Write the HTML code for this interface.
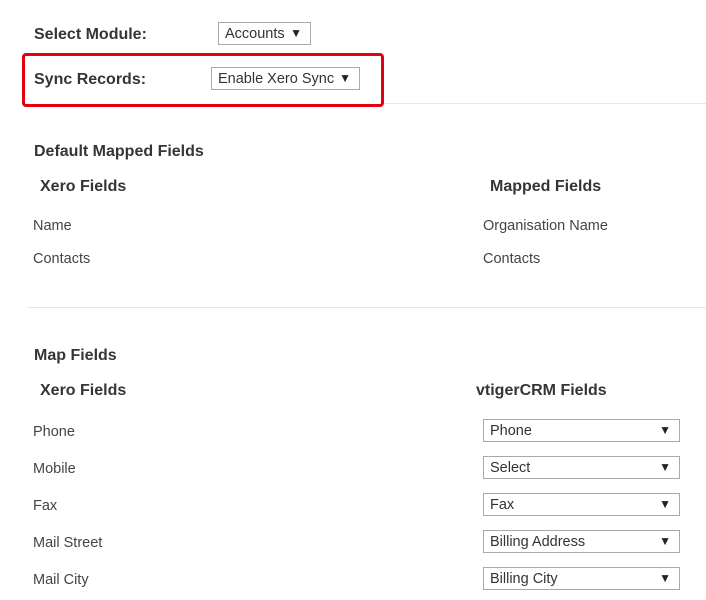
<!DOCTYPE html><html><head><style>
body{margin:0;width:706px;height:600px;background:#fff;font-family:"Liberation Sans",sans-serif;color:#333;position:relative;overflow:hidden}
.a{position:absolute;white-space:nowrap}
.h{font-size:16px;font-weight:bold;color:#353535;margin-top:2px}
.l{font-size:14.5px;color:#444;margin-top:2px}
.s{position:absolute;border:1px solid #a9a9a9;box-sizing:border-box;font-size:14.5px;color:#333;padding-left:6px;padding-top:1px;line-height:21px;background:#fff}
.s i{position:absolute;right:8px;top:0;font-style:normal;font-size:12px;color:#222}
.hr{position:absolute;height:1px;background:#e8e8e8}
</style></head><body>
<div class="a h" style="left:34px;top:24px">Select Module:</div>
<div class="s" style="left:218px;top:22px;width:93px;height:23px">Accounts<i style="right:8px">▼</i></div>
<div class="a" style="left:22px;top:53px;width:356px;height:48px;border:3px solid #e3000f;border-radius:4px"></div>
<div class="hr" style="left:384px;top:103px;width:322px"></div>
<div class="a h" style="left:34px;top:69px">Sync Records:</div>
<div class="s" style="left:211px;top:67px;width:149px;height:23px">Enable Xero Sync<i>▼</i></div>
<div class="a h" style="left:34px;top:141px">Default Mapped Fields</div>
<div class="a h" style="left:40px;top:176px">Xero Fields</div>
<div class="a h" style="left:490px;top:176px">Mapped Fields</div>
<div class="a l" style="left:33px;top:216px">Name</div>
<div class="a l" style="left:483px;top:216px">Organisation Name</div>
<div class="a l" style="left:33px;top:249px">Contacts</div>
<div class="a l" style="left:483px;top:249px">Contacts</div>
<div class="hr" style="left:27px;top:307px;width:679px"></div>
<div class="a h" style="left:34px;top:345px">Map Fields</div>
<div class="a h" style="left:40px;top:380px">Xero Fields</div>
<div class="a h" style="left:476px;top:380px">vtigerCRM Fields</div>
<div class="a l" style="left:33px;top:422px">Phone</div>
<div class="a l" style="left:33px;top:459px">Mobile</div>
<div class="a l" style="left:33px;top:496px">Fax</div>
<div class="a l" style="left:33px;top:533px">Mail Street</div>
<div class="a l" style="left:33px;top:570px">Mail City</div>
<div class="s" style="left:483px;top:419px;width:197px;height:23px">Phone<i>▼</i></div>
<div class="s" style="left:483px;top:456px;width:197px;height:23px">Select<i>▼</i></div>
<div class="s" style="left:483px;top:493px;width:197px;height:23px">Fax<i>▼</i></div>
<div class="s" style="left:483px;top:530px;width:197px;height:23px">Billing Address<i>▼</i></div>
<div class="s" style="left:483px;top:567px;width:197px;height:23px">Billing City<i>▼</i></div>
</body></html>
